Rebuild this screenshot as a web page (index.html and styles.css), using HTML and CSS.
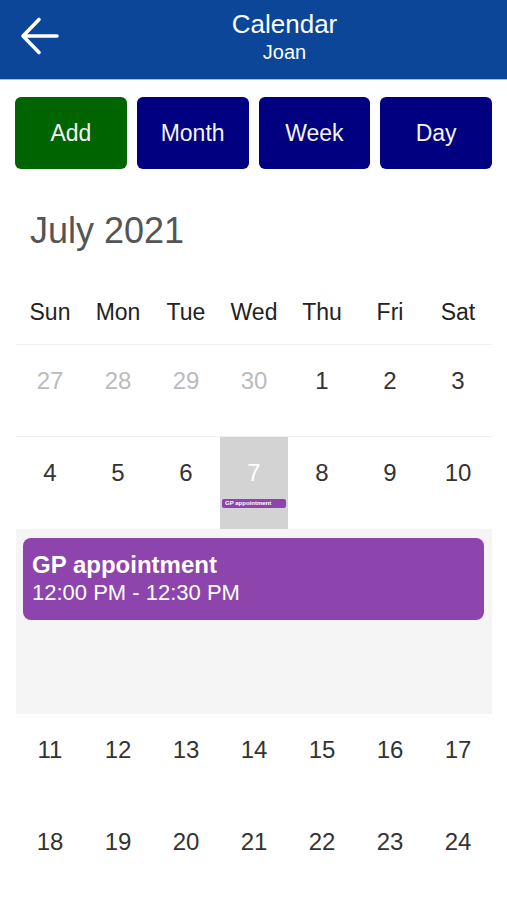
FILE: index.html
```html
<!DOCTYPE html>
<html lang="en">
<head>
<meta charset="utf-8">
<title>Calendar</title>
<link rel="stylesheet" href="styles.css">
</head>
<body>
<header class="topbar">
  <svg class="back" width="42" height="42" viewBox="0 0 42 42" aria-hidden="true">
    <path d="M4 21 H38 M20 4.5 L4 21 L20 37.5" fill="none" stroke="#fff" stroke-width="3.6" stroke-linecap="round" stroke-linejoin="round"/>
  </svg>
  <div class="titles">
    <div class="title">Calendar</div>
    <div class="subtitle">Joan</div>
  </div>
</header>

<nav class="actions">
  <button class="btn add">Add</button>
  <button class="btn">Month</button>
  <button class="btn">Week</button>
  <button class="btn">Day</button>
</nav>

<h1 class="month">July 2021</h1>

<section class="cal">
  <div class="weekdays">
    <span>Sun</span><span>Mon</span><span>Tue</span><span>Wed</span><span>Thu</span><span>Fri</span><span>Sat</span>
  </div>

  <div class="week line">
    <div class="day other">27</div>
    <div class="day other">28</div>
    <div class="day other">29</div>
    <div class="day other">30</div>
    <div class="day">1</div>
    <div class="day">2</div>
    <div class="day">3</div>
  </div>

  <div class="week">
    <div class="day">4</div>
    <div class="day">5</div>
    <div class="day">6</div>
    <div class="day selected">7<span class="badge">GP appointment</span></div>
    <div class="day">8</div>
    <div class="day">9</div>
    <div class="day">10</div>
  </div>

  <div class="events">
    <div class="event">
      <div class="event-title">GP appointment</div>
      <div class="event-time">12:00 PM - 12:30 PM</div>
    </div>
  </div>

  <div class="week">
    <div class="day">11</div>
    <div class="day">12</div>
    <div class="day">13</div>
    <div class="day">14</div>
    <div class="day">15</div>
    <div class="day">16</div>
    <div class="day">17</div>
  </div>

  <div class="week">
    <div class="day">18</div>
    <div class="day">19</div>
    <div class="day">20</div>
    <div class="day">21</div>
    <div class="day">22</div>
    <div class="day">23</div>
    <div class="day">24</div>
  </div>
</section>
</body>
</html>
```

FILE: styles.css
```css
* { box-sizing: border-box; }

html, body {
  margin: 0;
  padding: 0;
  background: #fff;
  font-family: "Liberation Sans", Arial, sans-serif;
  overflow: hidden;
}

.topbar {
  position: relative;
  height: 80px;
  background: #0b4699;
  border-bottom: 1px solid #a9bedd;
  color: #fff;
}

.back {
  position: absolute;
  left: 19px;
  top: 15px;
}

.titles {
  padding: 9px 0 0 62px;
  text-align: center;
}

.title {
  font-size: 26px;
  line-height: 30px;
}

.subtitle {
  font-size: 20px;
  line-height: 26px;
}

.actions {
  display: flex;
  gap: 10px;
  padding: 0 15px;
  margin-top: 17px;
}

.btn {
  flex: 1;
  height: 72px;
  border: none;
  border-radius: 6px;
  background: #000080;
  color: #f4f4f4;
  font-family: "Liberation Sans", Arial, sans-serif;
  font-size: 23px;
  padding: 0;
}

.btn.add { background: #006400; }

.month {
  margin: 40px 0 0;
  padding-left: 30px;
  height: 44px;
  font-size: 36px;
  line-height: 44px;
  font-weight: normal;
  color: #555;
}

.cal {
  margin: 45px 15px 0 16px;
}

.weekdays {
  display: grid;
  grid-template-columns: repeat(7, 1fr);
  height: 47px;
  border-bottom: 1px solid #f0f0f0;
  font-size: 23px;
  line-height: 28px;
  color: #222;
  text-align: center;
}

.week {
  display: grid;
  grid-template-columns: repeat(7, 1fr);
  height: 92px;
}

.week.line { border-bottom: 1px solid #f0f0f0; }

.day {
  position: relative;
  padding-top: 21px;
  font-size: 24px;
  line-height: 30px;
  text-align: center;
  color: #333;
}

.day.other { color: #bbb; }

.day.selected {
  background: #d3d3d3;
  color: #fff;
}

.badge {
  position: absolute;
  left: 2px;
  right: 2px;
  top: 62px;
  height: 9px;
  border-radius: 2px;
  background: #8e44ad;
  color: #fff;
  font-size: 6px;
  font-weight: bold;
  line-height: 9px;
  text-align: left;
  padding-left: 3px;
  white-space: nowrap;
  overflow: hidden;
}

.events {
  height: 185px;
  background: #f5f5f5;
  padding: 9px 8px 0 7px;
}

.event {
  height: 82px;
  border-radius: 8px;
  background: #8e44ad;
  color: #fff;
  padding: 13px 9px 0;
}

.event-title {
  font-size: 24px;
  font-weight: bold;
  line-height: 28px;
}

.event-time {
  font-size: 22px;
  line-height: 28px;
}
```
